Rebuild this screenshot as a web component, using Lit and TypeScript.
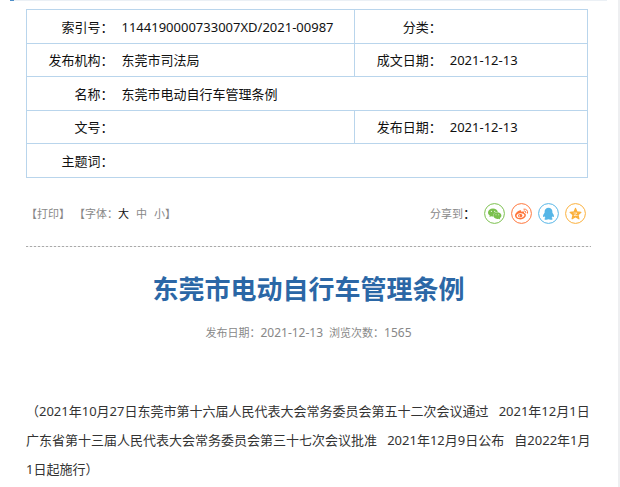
import { LitElement, html, css, svg } from "lit";
import { customElement, state } from "lit/decorators.js";
import { classMap } from "lit/directives/class-map.js";

const wechat = svg`
  <path d="M9 5.500c-2.900 0-5 1.800-5 4 0 1.300.7 2.400 1.800 3.100l-.4 1.500 1.800-.9c.6.200 1.200.2 1.800.2C8.800 10.700 10.800 8.900 13.800 8.900 13.500 6.900 11.500 5.500 9 5.500z"/>
  <path d="M13.300 9.300c-2.400 0-4.100 1.500-4.100 3.300s1.700 3.300 4.100 3.300c.5 0 1-.1 1.400-.2l1.500.8-.3-1.400c1-.6 1.500-1.500 1.500-2.500 0-1.800-1.700-3.300-4.100-3.300z"/>
  <g fill="#fff" fill-opacity=".8"><circle cx="7.400" cy="8.400" r=".6"/><circle cx="10.700" cy="8.400" r=".6"/><circle cx="12" cy="11.800" r=".5"/><circle cx="14.700" cy="11.800" r=".5"/></g>`;

const weibo = svg`
  <path fill-rule="evenodd" d="M8.600 7.500c1-.4 1.900 0 1.700 1.400 1.600-.6 3-.3 2.700 1.100 1.100.3 1.900 1 1.900 2.100 0 2.300-2.500 4.300-5.500 4.300s-5.400-1.600-5.400-3.900c0-2 2.500-4.300 4.600-5zM9.200 10.200c-2.200.2-3.800 1.300-3.600 2.700.1 1.400 1.900 2.200 4.100 2s3.800-1.400 3.700-2.800c-.1-1.300-2-2.100-4.200-1.900z"/>
  <path fill-rule="evenodd" d="M9.300 10.900c-1.400 0-2.300.8-2.300 1.800s.8 1.700 2 1.700c1.400 0 2.400-.9 2.400-2 0-.9-.8-1.500-2.100-1.500zM8.400 12.200a.7.700 0 1 1 0 1.400.7.700 0 0 1 0-1.400z"/>
  <path fill="none" stroke="currentColor" stroke-width="1" stroke-linecap="round" d="M12.900 6.100c2.400-.4 4.200 1.500 3.700 4M13.100 8c1.200-.2 1.900.6 1.700 1.700"/>`;

const qq = svg`
  <path d="M10.500 4.800c-2.300 0-3.900 1.700-3.900 3.900v1C5.700 10.900 5 12 5 13.300c0 .7.3.9.6.7l.8-.8c.2.700.6 1.300 1.100 1.800-.6.200-1 .5-1 .9 0 .7.8.9 1.900.9.800 0 1.600-.2 2.100-.5.500.3 1.300.5 2.100.5 1.100 0 1.900-.2 1.900-.9 0-.4-.4-.7-1-.9.5-.5.9-1.100 1.100-1.800l.8.8c.3.200.6 0 .6-.7 0-1.300-.7-2.400-1.600-3.600v-1c0-2.200-1.600-3.900-3.900-3.900z"/>`;

const qzone = svg`
  <path stroke="currentColor" stroke-width="1.200" stroke-linejoin="round" d="M10.500 5.400l1.500 3.500 3.900.4-2.900 2.600.9 3.900-3.400-2-3.400 2 .9-3.900-2.900-2.600 3.900-.4z"/>
  <path fill="none" stroke="#fff" stroke-width=".6" d="M8.500 10h3.500l-3.100 2.500h3.700"/>`;

const shares = [
  { name: "微信", cls: "wechat", glyph: wechat },
  { name: "微博", cls: "weibo", glyph: weibo },
  { name: "QQ", cls: "qq", glyph: qq },
  { name: "QQ空间", cls: "qzone", glyph: qzone },
];

const sizes = [
  { id: "large", label: "大" },
  { id: "medium", label: "中" },
  { id: "small", label: "小" },
];

@customElement("app-root")
export class AppRoot extends LitElement {
  @state() private size = "large";

  static styles = css`
    :host {
      display: block;
      font: 13px/20px "Noto Sans", "Noto Sans CJK SC", sans-serif;
      color: #111;
      background: #fff;
    }
    * { box-sizing: border-box; }
    .page {
      min-height: 100vh;
      border-right: 2px solid #eeeff1;
      overflow: hidden;
    }
    .rule {
      height: 1px;
      margin: 0 11px 0 10px;
      background: #ebf0f5;
      border-left: 4px solid #4f8fc8;
    }
    .content { padding: 8px 27px 0 26px; }
    .info {
      width: calc(100% - 3px);
      border-collapse: collapse;
      table-layout: fixed;
    }
    .c-label { width: 87px; }
    .c-value { width: 43%; }
    .info tr { height: 34px; }
    .info tr:nth-child(even) { height: 33px; }
    .info th, .info td {
      padding: 0;
      line-height: 20px;
      border: 0 solid #b9d5ec;
      border-width: 1px 0;
    }
    .info th { font-weight: 400; text-align: right; }
    .info td { padding-left: 8px; text-align: left; }
    .info th:first-child, .info .split { border-left-width: 1px; }
    .info td:last-child { border-right-width: 1px; }
    .bar {
      display: flex;
      justify-content: space-between;
      align-items: center;
      margin-top: 25px;
      padding-right: 5px;
      font-size: 11px;
      color: #888;
    }
    .tools, .share, .sizes, .icons { display: flex; align-items: center; }
    .tools { gap: 4px; }
    .sizes { gap: 7px; }
    .group { display: flex; }
    button {
      appearance: none;
      border: 0;
      padding: 0;
      background: none;
      font: inherit;
      color: inherit;
      cursor: pointer;
    }
    .on { color: #111; }
    .colon { color: #111; font-size: 13px; }
    .share { gap: 8px; }
    .icons { gap: 6px; }
    .icons a { display: block; height: 21px; }
    .icons svg { display: block; width: 21px; height: 21px; fill: currentColor; }
    .wechat { color: #7bc04d; }
    .weibo { color: #ff763b; }
    .qq { color: #56b6e7; }
    .qzone { color: #fbb03b; }
    .dash {
      height: 1px;
      margin-top: 22px;
      background: repeating-linear-gradient(90deg, #aaa 0 2px, #eee 2px 4px);
    }
    h1 {
      margin: 23px 0 0;
      font-size: 26px;
      line-height: 38px;
      text-align: center;
      color: #2b67a6;
    }
    .meta {
      display: flex;
      justify-content: center;
      align-items: baseline;
      gap: 6px;
      margin-top: 15px;
      font-size: 11px;
      color: #888;
    }
    .num { font-size: 12px; }
    .body {
      margin: 54px 0 0;
      line-height: 29px;
      color: #333;
    }
    .body.medium { font-size: 12px; }
    .body.small { font-size: 11px; }
  `;

  render() {
    return html`
      <main class="page">
        <div class="rule"></div>
        <div class="content">
          <table class="info">
            <colgroup>
              <col class="c-label" /><col class="c-value" /><col class="c-label" /><col />
            </colgroup>
            <tr>
              <th scope="row">索引号：</th><td>1144190000733007XD/2021-00987</td>
              <th scope="row" class="split">分类：</th><td></td>
            </tr>
            <tr>
              <th scope="row">发布机构：</th><td>东莞市司法局</td>
              <th scope="row" class="split">成文日期：</th><td>2021-12-13</td>
            </tr>
            <tr><th scope="row">名称：</th><td colspan="3">东莞市电动自行车管理条例</td></tr>
            <tr>
              <th scope="row">文号：</th><td></td>
              <th scope="row" class="split">发布日期：</th><td>2021-12-13</td>
            </tr>
            <tr><th scope="row">主题词：</th><td colspan="3"></td></tr>
          </table>

          <div class="bar">
            <div class="tools">
              <button @click=${() => window.print()}>【打印】</button>
              <div class="group">
                <span>【字体：</span>
                <div class="sizes">
                  ${sizes.map(
                    (s) => html`<button
                      class=${classMap({ on: this.size === s.id })}
                      aria-pressed=${this.size === s.id}
                      @click=${() => (this.size = s.id)}
                    >${s.label}</button>`
                  )}
                </div>
                <span>】</span>
              </div>
            </div>
            <div class="share">
              <span>分享到<span class="colon">：</span></span>
              <div class="icons">
                ${shares.map(
                  (s) => html`<a href="#" class=${s.cls} aria-label=${s.name}>
                    <svg viewBox="0 0 21 21" aria-hidden="true">
                      <circle cx="10.500" cy="10.500" r="9.900" fill="none" stroke="currentColor" />
                      ${s.glyph}
                    </svg>
                  </a>`
                )}
              </div>
            </div>
          </div>

          <div class="dash"></div>
          <h1>东莞市电动自行车管理条例</h1>
          <div class="meta">
            <span>发布日期：<span class="num">2021-12-13</span></span>
            <span>浏览次数：<span class="num">1565</span></span>
          </div>
          <p class="body ${this.size}">（2021年10月27日东莞市第十六届人民代表大会常务委员会第五十二次会议通过&nbsp;&nbsp; 2021年12月1日广东省第十三届人民代表大会常务委员会第三十七次会议批准&nbsp;&nbsp; 2021年12月9日公布&nbsp;&nbsp; 自2022年1月1日起施行）</p>
        </div>
      </main>
    `;
  }
}
